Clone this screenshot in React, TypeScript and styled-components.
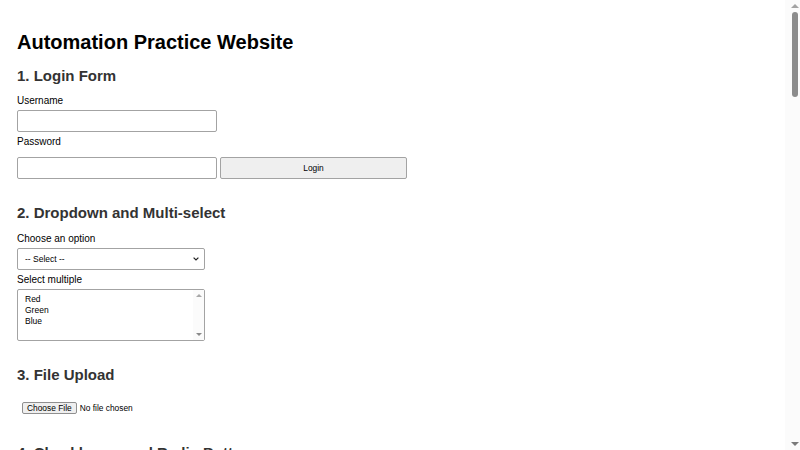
import React from "react";
import styled, { createGlobalStyle } from "styled-components";

const Global = createGlobalStyle`
  html, body { margin: 0; padding: 0; background: #fff; }
  body { font-family: "Liberation Sans", Arial, sans-serif; color: #000; }
`;

const Page = styled.div`
  padding: 30px 32px 40px 17px;
`;

const Title = styled.h1`
  font-size: 20px;
  font-weight: bold;
  margin: 0;
  line-height: 24px;
`;

const Section = styled.section`
  display: flex;
  flex-direction: column;
  align-items: flex-start;
`;

const Heading = styled.h2<{ $top: number }>`
  font-size: 15px;
  font-weight: bold;
  color: #333;
  margin: ${(p) => p.$top}px 0 0 0;
  line-height: 18px;
`;

const Label = styled.label<{ $top: number }>`
  font-size: 10px;
  line-height: 12px;
  margin: ${(p) => p.$top}px 0 0 0;
  color: #000;
`;

const Row = styled.div`
  display: flex;
  gap: 3px;
  margin-top: 9px;
`;

const TextInput = styled.input<{ $top?: number }>`
  box-sizing: border-box;
  width: 200px;
  height: 22px;
  border: 1px solid #a3a3a3;
  border-radius: 2px;
  padding: 2px 4px;
  font-size: 10px;
  margin: ${(p) => p.$top ?? 0}px 0 0 0;
  outline: none;
`;

const Button = styled.button`
  box-sizing: border-box;
  width: 187px;
  height: 22px;
  border: 1px solid #a3a3a3;
  border-radius: 2px;
  background: #efefef;
  font-family: "Liberation Sans", Arial, sans-serif;
  font-size: 8.4px;
  color: #000;
  margin: 0;
  padding: 0;
`;

const SelectWrap = styled.div`
  position: relative;
  margin-top: 3px;
  width: 188px;
`;

const Select = styled.select`
  appearance: none;
  box-sizing: border-box;
  display: block;
  width: 188px;
  height: 22px;
  border: 1px solid #a3a3a3;
  border-radius: 2px;
  font-family: "Liberation Sans", Arial, sans-serif;
  font-size: 8.5px;
  padding: 0 16px 0 7px;
  background: #fff;
  color: #000;
  margin: 0;
  outline: none;
`;

const Chevron = styled.svg`
  position: absolute;
  right: 6px;
  top: 9px;
  width: 6px;
  height: 4px;
  pointer-events: none;
`;

const Multi = styled.select`
  box-sizing: border-box;
  display: block;
  width: 188px;
  height: 52px;
  border: 1px solid #a3a3a3;
  border-radius: 2px;
  font-family: "Liberation Sans", Arial, sans-serif;
  font-size: 8.5px;
  padding: 4px 5px;
  margin: 0;
  color: #000;
  outline: none;
  overflow: hidden;
`;

const ListTrack = styled.div`
  position: absolute;
  right: 1px;
  top: 1px;
  bottom: 1px;
  width: 11px;
  background: #fbfbfb;
  pointer-events: none;
`;

const Arrow = styled.div<{ $down?: boolean }>`
  position: absolute;
  left: 3px;
  ${(p) => (p.$down ? "bottom: 4px;" : "top: 4px;")}
  width: 0;
  height: 0;
  border-left: 3px solid transparent;
  border-right: 3px solid transparent;
  ${(p) =>
    p.$down
      ? "border-top: 3px solid #8a8a8a;"
      : "border-bottom: 3px solid #a8a8a8;"}
`;

const FileWrap = styled.div`
  margin-top: 18px;
  padding-left: 5px;
  display: flex;
  align-items: center;
  height: 12px;
`;

const FileInput = styled.input`
  font-family: "Liberation Sans", Arial, sans-serif;
  font-size: 8.4px;
  color: #000;
  &::file-selector-button {
    font-family: "Liberation Sans", Arial, sans-serif;
    font-size: 8.4px;
    box-sizing: border-box;
    height: 12px;
    padding: 0 4px;
    margin-right: 3px;
    border: 1px solid #8f8f8f;
    border-radius: 2px;
    background: #efefef;
    color: #000;
  }
`;

const Filler = styled.div`
  height: 1700px;
`;

const ScrollTrack = styled.div`
  position: fixed;
  top: 0;
  right: 0;
  width: 15px;
  height: 100vh;
  background: #fbfbfb;
`;

const ScrollThumb = styled.div`
  position: absolute;
  left: 7px;
  top: 12px;
  width: 6px;
  height: 85px;
  border-radius: 3px;
  background: #8c8c8c;
`;

const ScrollArrow = styled.div<{ $down?: boolean }>`
  position: absolute;
  left: 6px;
  ${(p) => (p.$down ? "bottom: 4px;" : "top: 4px;")}
  width: 0;
  height: 0;
  border-left: 4px solid transparent;
  border-right: 4px solid transparent;
  ${(p) =>
    p.$down
      ? "border-top: 4px solid #7a7a7a;"
      : "border-bottom: 4px solid #a3a3a3;"}
`;

export default function App() {
  return (
    <>
      <Global />
      <Page>
        <Title>Automation Practice Website</Title>
        <Section>
          <Heading $top={13}>1. Login Form</Heading>
          <Label $top={10}>Username</Label>
          <TextInput $top={3} type="text" />
          <Label $top={4}>Password</Label>
          <Row>
            <TextInput type="password" />
            <Button>Login</Button>
          </Row>
        </Section>
        <Section>
          <Heading $top={25}>2. Dropdown and Multi-select</Heading>
          <Label $top={11}>Choose an option</Label>
          <SelectWrap>
            <Select defaultValue="">
              <option value="">-- Select --</option>
              <option>Option 1</option>
              <option>Option 2</option>
            </Select>
            <Chevron viewBox="0 0 6 4">
              <path d="M0.6 0.6 L3 3 L5.4 0.6" fill="none" stroke="#222" strokeWidth="1.2" />
            </Chevron>
          </SelectWrap>
          <Label $top={4}>Select multiple</Label>
          <SelectWrap>
            <Multi multiple defaultValue={[]}>
              <option>Red</option>
              <option>Green</option>
              <option>Blue</option>
            </Multi>
            <ListTrack>
              <Arrow />
              <Arrow $down />
            </ListTrack>
          </SelectWrap>
        </Section>
        <Section>
          <Heading $top={25}>3. File Upload</Heading>
          <FileWrap>
            <FileInput type="file" />
          </FileWrap>
        </Section>
        <Section>
          <Heading $top={30}>4. Checkboxes and Radio Buttons</Heading>
          <Filler />
        </Section>
      </Page>
      <ScrollTrack>
        <ScrollArrow />
        <ScrollThumb />
        <ScrollArrow $down />
      </ScrollTrack>
    </>
  );
}
